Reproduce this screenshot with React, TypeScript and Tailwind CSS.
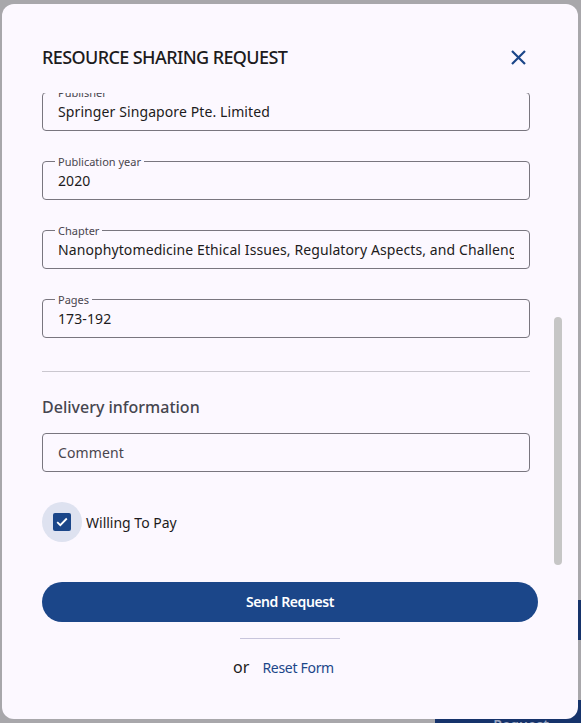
import { useState } from 'react';

const font = { fontFamily: '"Noto Sans", "Open Sans", sans-serif' };

function OutlinedField({ label, value, placeholder }: { label?: string; value?: string; placeholder?: string }) {
  return (
    <div className="relative h-[39px] shrink-0 rounded-[4px] border border-[#79767f]">
      {label && (
        <span className="absolute left-[12px] top-[-7px] bg-[#fcf8ff] px-[3px] text-[11px] leading-[14px] text-[#49454e]">
          {label}
        </span>
      )}
      <div className="flex h-full items-center pl-[15px] pr-[15px]">
        <div className="min-w-0 flex-1 overflow-hidden whitespace-nowrap text-[14px] tracking-[0.1px]">
          {value ? (
            <span className="text-[#1d1b20]">{value}</span>
          ) : (
            <span className="text-[#49454e]">{placeholder}</span>
          )}
        </div>
      </div>
    </div>
  );
}

export default function App() {
  const [willingToPay, setWillingToPay] = useState(true);

  return (
    <div className="relative h-[723px] w-[581px] overflow-hidden bg-[#a8a7ab]" style={font}>
      {/* bits of the page behind the scrim */}
      <div className="absolute right-0 top-[600px] h-[40px] w-[20px] bg-[#16336b]" />
      <div className="absolute left-[435px] top-[700px] flex h-[40px] w-[160px] items-start justify-center bg-[#16336b] pl-[12px] pt-[14px] text-[14px] font-semibold text-[#9aa6c0]">
        Request
      </div>

      <div className="absolute left-[2px] top-[4px] flex h-[715px] w-[576px] flex-col rounded-[12px] bg-[#fcf8ff]">
        <div className="flex items-center justify-between pl-[40px] pr-[40px] pt-[41px] pb-[24px]">
          <h1 className="text-[18px] font-medium leading-[24px] tracking-[-0.6px] text-[#1d1b20]">
            RESOURCE SHARING REQUEST
          </h1>
          <button className="-my-[8px] flex h-[40px] w-[40px] items-center justify-center" aria-label="Close">
            <svg width="15" height="15" viewBox="0 0 15 15" fill="none" stroke="#1b4689" strokeWidth="2.2">
              <path d="M1 1 L14 14 M14 1 L1 14" />
            </svg>
          </button>
        </div>

        <div className="relative ml-[40px] mr-[12px] h-[473px] overflow-hidden">
          <div className="-mt-[1px] flex flex-col pr-[36px]">
            <OutlinedField label="Publisher" value="Springer Singapore Pte. Limited" />
            <div className="mt-[30px]">
              <OutlinedField label="Publication year" value="2020" />
            </div>
            <div className="mt-[30px]">
              <OutlinedField
                label="Chapter"
                value="Nanophytomedicine Ethical Issues, Regulatory Aspects, and Challenges"
              />
            </div>
            <div className="mt-[30px]">
              <OutlinedField label="Pages" value="173-192" />
            </div>

            <div className="mt-[33px] h-px bg-[#cac7cf]" />

            <h2 className="mt-[23px] text-[16px] font-medium leading-[24px] text-[#46464f]">Delivery information</h2>

            <div className="mt-[14px]">
              <OutlinedField placeholder="Comment" />
            </div>

            <label className="mt-[30px] flex cursor-pointer items-center">
              <span className="flex h-[40px] w-[40px] items-center justify-center rounded-full bg-[#dee2f0]">
                <span
                  onClick={() => setWillingToPay(!willingToPay)}
                  className={
                    willingToPay
                      ? 'flex h-[18px] w-[18px] items-center justify-center rounded-[2px] bg-[#1b4689]'
                      : 'flex h-[18px] w-[18px] items-center justify-center rounded-[2px] border-2 border-[#49454e]'
                  }
                >
                  {willingToPay && (
                    <svg width="12" height="10" viewBox="0 0 12 10" fill="none" stroke="white" strokeWidth="1.8">
                      <path d="M1.2 5.2 L4.3 8.2 L10.8 1.5" />
                    </svg>
                  )}
                </span>
              </span>
              <span className="ml-[4px] text-[14px] text-[#1d1b20]">Willing To Pay</span>
            </label>
          </div>

          {/* scroll thumb */}
          <div className="absolute right-[4px] top-[224px] h-[248px] w-[8px] rounded-full bg-[#c6c6c6]" />
        </div>

        <div className="mx-[40px] mt-[16px]">
          <button className="flex h-[40px] w-full items-center justify-center rounded-full bg-[#1b4689] pb-px text-[14px] font-semibold tracking-[-0.4px] text-white">
            Send Request
          </button>
        </div>

        <div className="mx-auto mt-[16px] h-px w-[100px] bg-[#c8c5dc]" />

        <div className="mt-[16px] flex items-center justify-center gap-[13px] pr-[13px]">
          <span className="text-[16px] text-[#1d1b20]">or</span>
          <button className="text-[14px] tracking-[-0.3px] text-[#1b4689]">Reset Form</button>
        </div>
      </div>
    </div>
  );
}
